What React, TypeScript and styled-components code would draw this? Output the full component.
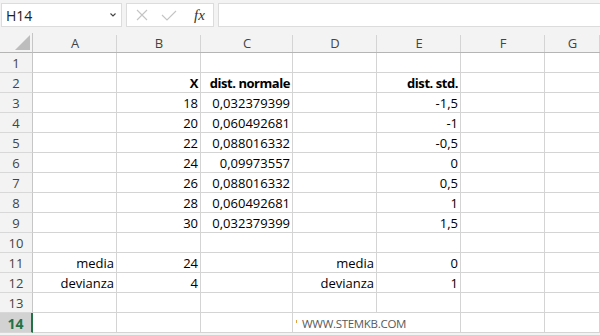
import React from "react";
import styled, { createGlobalStyle } from "styled-components";

const Global = createGlobalStyle`
  html, body { margin: 0; padding: 0; background: #ffffff; }
  body { width: 600px; height: 335px; overflow: hidden; font-family: "Open Sans", "Liberation Sans", sans-serif; }
`;

const Page = styled.div`
  width: 600px;
  height: 335px;
  overflow: hidden;
  background: #f3f3f3;
  display: flex;
  flex-direction: column;
`;

const FormulaBar = styled.div`
  display: flex;
  align-items: stretch;
  height: 24px;
  padding: 3px 0 0 1px;
  gap: 4px;
  margin-bottom: 6px;
`;

const NameBox = styled.div`
  width: 121px;
  box-sizing: border-box;
  background: #fff;
  border: 1px solid #dcdcdc;
  display: flex;
  align-items: center;
  justify-content: space-between;
  padding: 0 4px 0 4px;
  font-size: 14px;
  color: #222;
`;

const Buttons = styled.div`
  width: 88px;
  box-sizing: border-box;
  background: #fff;
  border: 1px solid #dcdcdc;
  display: flex;
  align-items: center;
  padding-left: 9px;
  gap: 13px;
`;

const Fx = styled.span`
  font-family: "Liberation Serif", serif;
  font-style: italic;
  font-size: 15px;
  color: #333;
  margin-left: 4px;
`;

const FormulaInput = styled.div`
  flex: 1;
  background: #fff;
  border: 1px solid #dcdcdc;
  border-right: none;
`;

const Grid = styled.div`
  display: grid;
  grid-template-columns: 33px 84px 84px 92px 84px 84px 84px 1fr;
  grid-auto-rows: 20px;
  background: #fff;
`;

const Corner = styled.div`
  background: #f3f3f3;
  border-right: 1px solid #c6c6c6;
  border-bottom: 1px solid #b5b5b5;
  box-sizing: border-box;
  position: relative;
`;

const Triangle = styled.div`
  position: absolute;
  right: 2px;
  bottom: 2px;
  width: 0;
  height: 0;
  border-left: 15px solid transparent;
  border-bottom: 15px solid #bdbdbd;
`;

const ColHead = styled.div`
  background: #f3f3f3;
  box-sizing: border-box;
  border-bottom: 1px solid #b5b5b5;
  position: relative;
  display: flex;
  align-items: center;
  justify-content: center;
  font-size: 13px;
  color: #444;
  &::after {
    content: "";
    position: absolute;
    right: 0;
    top: 2px;
    bottom: 0;
    width: 1px;
    background: #d4d4d4;
  }
`;

const RowHead = styled.div<{ $sel?: boolean }>`
  background: ${(p) => (p.$sel ? "#d2d2d2" : "#f3f3f3")};
  box-sizing: border-box;
  border-bottom: 1px solid #d8d8d8;
  border-right: ${(p) => (p.$sel ? "2px solid #217346" : "1px solid #c6c6c6")};
  display: flex;
  align-items: center;
  justify-content: center;
  font-size: ${(p) => (p.$sel ? "14px" : "13px")};
  color: ${(p) => (p.$sel ? "#217346" : "#444")};
  font-weight: ${(p) => (p.$sel ? 700 : 400)};
  padding-top: 1px;
`;

const Cell = styled.div<{ $bold?: boolean; $span?: number }>`
  box-sizing: border-box;
  border-right: 1px solid #d4d4d4;
  border-bottom: 1px solid #d4d4d4;
  display: flex;
  align-items: center;
  justify-content: flex-end;
  padding: 1px 2px 0 0;
  font-size: 13px;
  color: #000;
  white-space: nowrap;
  font-weight: ${(p) => (p.$bold ? 700 : 400)};
  letter-spacing: ${(p) => (p.$bold ? "-0.45px" : "0")};
  ${(p) => (p.$span ? `grid-column: span ${p.$span};` : "")}
`;

const Watermark = styled(Cell)`
  justify-content: flex-start;
  padding-left: 9px;
  font-size: 11.5px;
  letter-spacing: -0.3px;
  color: #595959;
  position: relative;
`;

const Tick = styled.span`
  position: absolute;
  left: 3px;
  top: 7px;
  width: 1px;
  height: 3px;
  background: #e0a040;
`;

type C = { t: string; b?: boolean };
const e: C = { t: "" };
const n = (t: string, b?: boolean): C => ({ t, b });

const data: C[][] = [
  [e, e, e, e, e, e, e],
  [e, n("X", true), n("dist. normale", true), e, n("dist. std.", true), e, e],
  [e, n("18"), n("0,032379399"), e, n("-1,5"), e, e],
  [e, n("20"), n("0,060492681"), e, n("-1"), e, e],
  [e, n("22"), n("0,088016332"), e, n("-0,5"), e, e],
  [e, n("24"), n("0,09973557"), e, n("0"), e, e],
  [e, n("26"), n("0,088016332"), e, n("0,5"), e, e],
  [e, n("28"), n("0,060492681"), e, n("1"), e, e],
  [e, n("30"), n("0,032379399"), e, n("1,5"), e, e],
  [e, e, e, e, e, e, e],
  [n("media"), n("24"), e, n("media"), n("0"), e, e],
  [n("devianza"), n("4"), e, n("devianza"), n("1"), e, e],
  [e, e, e, e, e, e, e],
];

const cols = ["A", "B", "C", "D", "E", "F", "G"];

export default function App() {
  return (
    <Page>
      <Global />
      <FormulaBar>
        <NameBox>
          <span>H14</span>
          <svg width="8" height="6" viewBox="0 0 8 6">
            <path d="M1.5 1.5 L4 4 L6.5 1.5" fill="none" stroke="#444" strokeWidth="1.1" />
          </svg>
        </NameBox>
        <Buttons>
          <svg width="12" height="12" viewBox="0 0 12 12">
            <path d="M1 1 L11 11 M11 1 L1 11" stroke="#c4c4c4" strokeWidth="1.1" />
          </svg>
          <svg width="16" height="11" viewBox="0 0 16 11">
            <path d="M1 5 L6 10 L15 1" fill="none" stroke="#c4c4c4" strokeWidth="1.1" />
          </svg>
          <Fx>fx</Fx>
        </Buttons>
        <FormulaInput />
      </FormulaBar>
      <Grid>
        <Corner>
          <Triangle />
        </Corner>
        {cols.map((c) => (
          <ColHead key={c}>{c}</ColHead>
        ))}
        {data.map((row, i) => (
          <React.Fragment key={i}>
            <RowHead>{i + 1}</RowHead>
            {row.map((c, j) => (
              <Cell key={j} $bold={c.b}>
                {c.t}
              </Cell>
            ))}
          </React.Fragment>
        ))}
        <RowHead $sel>14</RowHead>
        <Cell />
        <Cell />
        <Cell />
        <Watermark $span={2}>
          <Tick />
          WWW.STEMKB.COM
        </Watermark>
        <Cell />
        <Cell />
      </Grid>
    </Page>
  );
}
